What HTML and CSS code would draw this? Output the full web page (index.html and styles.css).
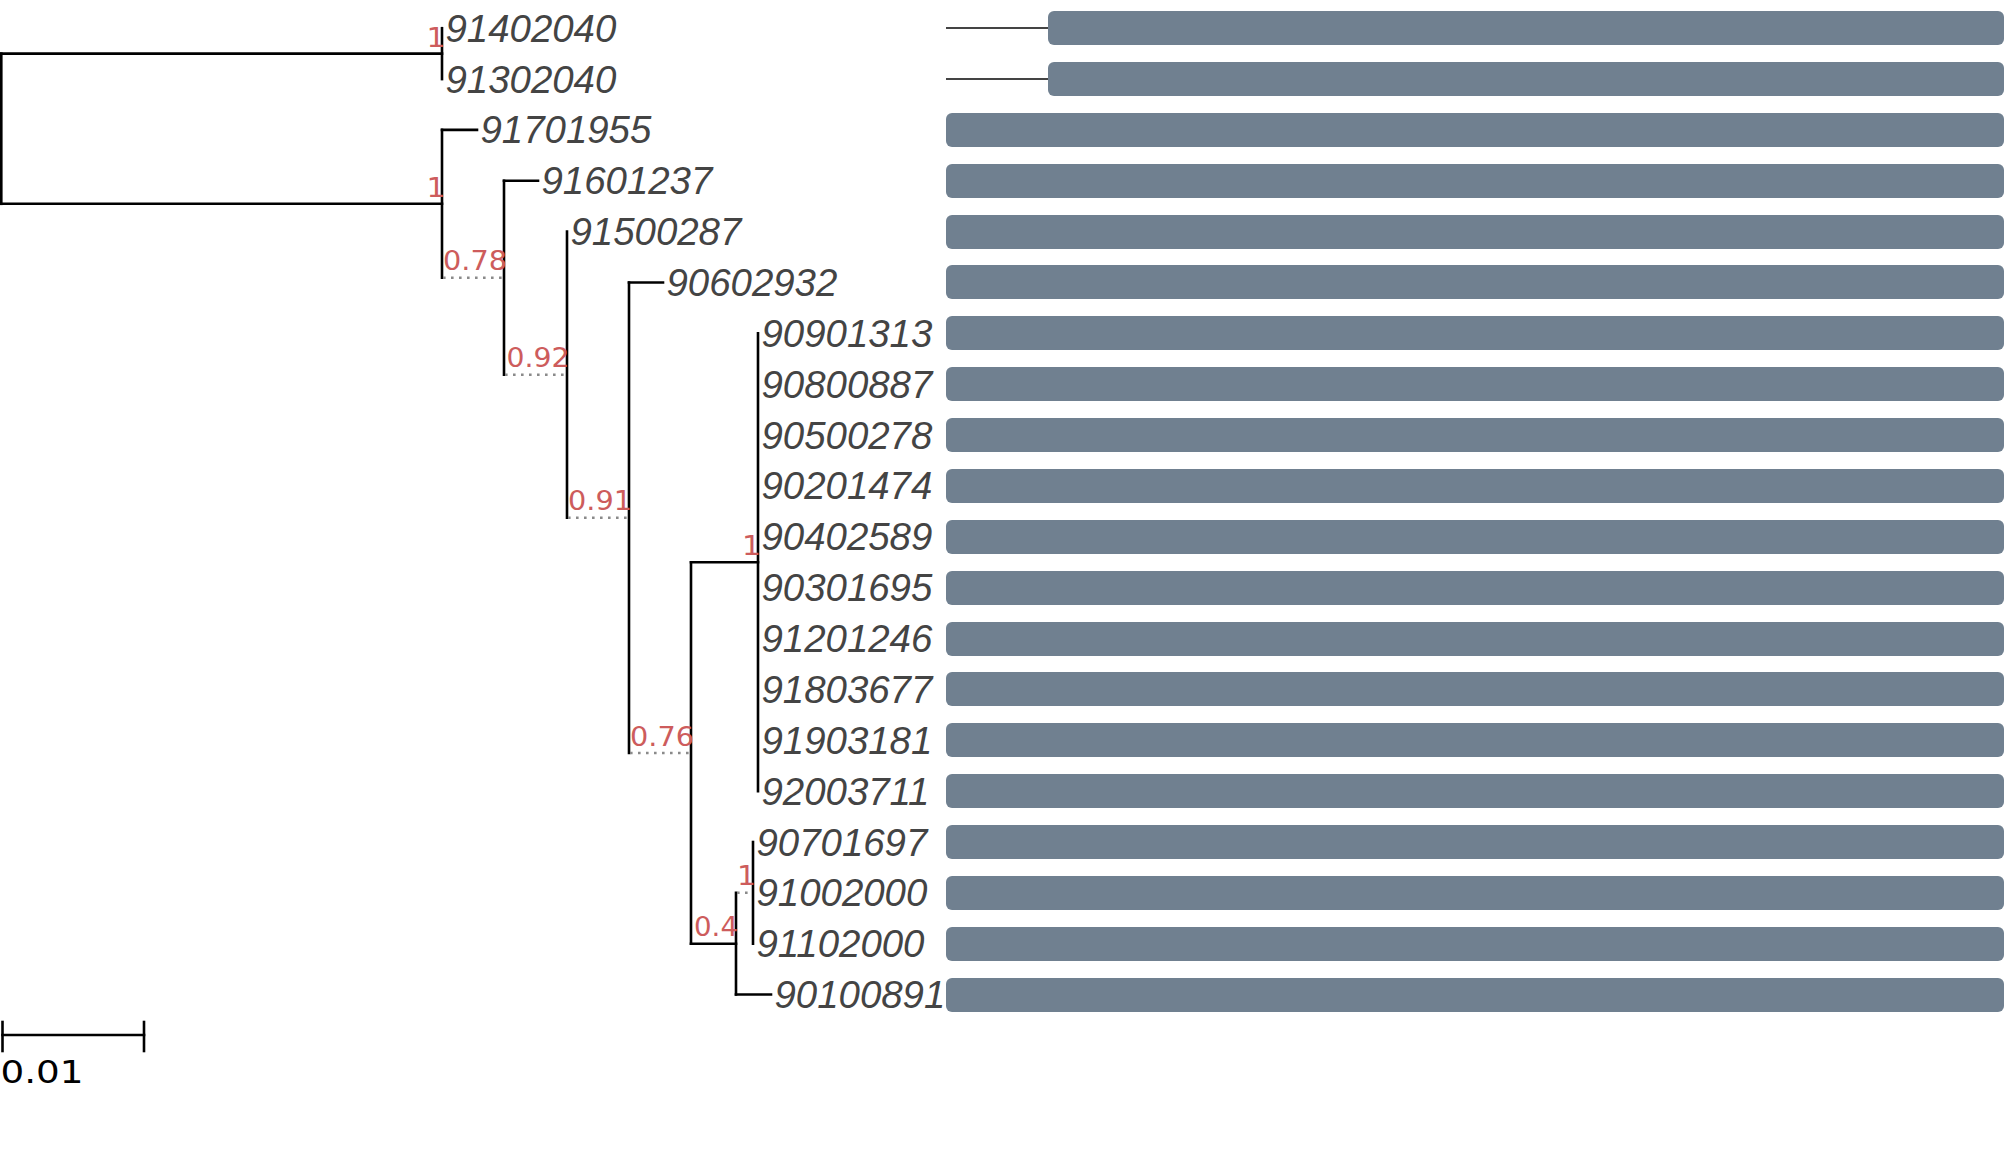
FILE: index.html
```html
<!DOCTYPE html>
<html lang="en">
<head>
<meta charset="utf-8">
<title>Phylogenetic tree</title>
<link rel="stylesheet" href="styles.css">
</head>
<body>
<div class="figure">
  <svg class="tree" width="946" height="1163" viewBox="0 0 946 1163">
    <g class="branch">
      <!-- root -->
      <line x1="1.3" y1="53.6" x2="1.3" y2="203.8"/>
      <line x1="0" y1="53.6" x2="442" y2="53.6"/>
      <line x1="0" y1="203.8" x2="442" y2="203.8"/>
      <!-- A -->
      <line x1="442" y1="28.2" x2="442" y2="79.1"/>
      <!-- B -->
      <line x1="442" y1="129.9" x2="442" y2="277.7"/>
      <line x1="442" y1="129.9" x2="477" y2="129.9"/>
      <!-- C -->
      <line x1="504" y1="180.8" x2="504" y2="374.7"/>
      <line x1="504" y1="180.8" x2="538" y2="180.8"/>
      <!-- D -->
      <line x1="567" y1="231.6" x2="567" y2="517.7"/>
      <!-- E -->
      <line x1="629" y1="282.5" x2="629" y2="753"/>
      <line x1="629" y1="282.5" x2="663" y2="282.5"/>
      <!-- F -->
      <line x1="691" y1="562.3" x2="691" y2="943.7"/>
      <line x1="691" y1="562.3" x2="758" y2="562.3"/>
      <line x1="691" y1="943.7" x2="736" y2="943.7"/>
      <!-- G -->
      <line x1="758" y1="333.4" x2="758" y2="791.1"/>
      <!-- H -->
      <line x1="736" y1="892.8" x2="736" y2="994.5"/>
      <line x1="736" y1="994.5" x2="771" y2="994.5"/>
      <!-- I -->
      <line x1="753" y1="842" x2="753" y2="943.7"/>
    </g>
    <g class="dotted">
      <line x1="443" y1="277.7" x2="504" y2="277.7"/>
      <line x1="505" y1="374.7" x2="567" y2="374.7"/>
      <line x1="568" y1="517.7" x2="629" y2="517.7"/>
      <line x1="630" y1="753" x2="691" y2="753"/>
      <line x1="737" y1="892.8" x2="753" y2="892.8"/>
    </g>
    <g class="support">
      <text x="445.5" y="46.5" textLength="19" lengthAdjust="spacingAndGlyphs">1</text>
      <text x="445.5" y="196.5" textLength="19" lengthAdjust="spacingAndGlyphs">1</text>
      <text x="507" y="270.2" textLength="64" lengthAdjust="spacingAndGlyphs">0.78</text>
      <text x="569.5" y="367.2" textLength="63" lengthAdjust="spacingAndGlyphs">0.92</text>
      <text x="632" y="510.2" textLength="64" lengthAdjust="spacingAndGlyphs">0.91</text>
      <text x="694" y="745.5" textLength="64" lengthAdjust="spacingAndGlyphs">0.76</text>
      <text x="761" y="555" textLength="19" lengthAdjust="spacingAndGlyphs">1</text>
      <text x="738" y="936.2" textLength="44" lengthAdjust="spacingAndGlyphs">0.4</text>
      <text x="756" y="885.3" textLength="19" lengthAdjust="spacingAndGlyphs">1</text>
    </g>
    <g class="tip">
      <text x="445.5" y="41.7">91402040</text>
      <text x="445.5" y="92.6">91302040</text>
      <text x="480.5" y="143.4">91701955</text>
      <text x="541.5" y="194.3">91601237</text>
      <text x="570.5" y="245.1">91500287</text>
      <text x="666.5" y="296">90602932</text>
      <text x="761.5" y="346.9">90901313</text>
      <text x="761.5" y="397.7">90800887</text>
      <text x="761.5" y="448.6">90500278</text>
      <text x="761.5" y="499.4">90201474</text>
      <text x="761.5" y="550.3">90402589</text>
      <text x="761.5" y="601.2">90301695</text>
      <text x="761.5" y="652">91201246</text>
      <text x="761.5" y="702.9">91803677</text>
      <text x="761.5" y="753.7">91903181</text>
      <text x="761.5" y="804.6">92003711</text>
      <text x="756.5" y="855.5">90701697</text>
      <text x="756.5" y="906.3">91002000</text>
      <text x="756.5" y="957.2">91102000</text>
      <text x="774.5" y="1008">90100891</text>
    </g>
    <g class="scale">
      <line x1="2.5" y1="1035" x2="144" y2="1035"/>
      <line x1="2.5" y1="1022" x2="2.5" y2="1051"/>
      <line x1="144" y1="1022" x2="144" y2="1051"/>
      <text x="0.5" y="1083" textLength="83" lengthAdjust="spacingAndGlyphs">0.01</text>
    </g>
  </svg>
  <div class="tracks">
    <div class="track"><span class="lead"></span><span class="bar"></span></div>
    <div class="track"><span class="lead"></span><span class="bar"></span></div>
    <div class="track"><span class="bar"></span></div>
    <div class="track"><span class="bar"></span></div>
    <div class="track"><span class="bar"></span></div>
    <div class="track"><span class="bar"></span></div>
    <div class="track"><span class="bar"></span></div>
    <div class="track"><span class="bar"></span></div>
    <div class="track"><span class="bar"></span></div>
    <div class="track"><span class="bar"></span></div>
    <div class="track"><span class="bar"></span></div>
    <div class="track"><span class="bar"></span></div>
    <div class="track"><span class="bar"></span></div>
    <div class="track"><span class="bar"></span></div>
    <div class="track"><span class="bar"></span></div>
    <div class="track"><span class="bar"></span></div>
    <div class="track"><span class="bar"></span></div>
    <div class="track"><span class="bar"></span></div>
    <div class="track"><span class="bar"></span></div>
    <div class="track"><span class="bar"></span></div>
  </div>
</div>
</body>
</html>
```

FILE: styles.css
```css
html, body {
  margin: 0;
  padding: 0;
  background: #ffffff;
}

body {
  width: 2007px;
  height: 1163px;
  overflow: hidden;
  font-family: "Liberation Sans", Arial, sans-serif;
}

.figure {
  display: flex;
  align-items: flex-start;
  width: 2007px;
  height: 1163px;
}

.tree {
  flex: none;
  display: block;
  overflow: visible;
}

.branch line,
.scale line {
  stroke: #000000;
  stroke-width: 2.6;
  stroke-linecap: square;
}

.dotted line {
  stroke: #8a8a8a;
  stroke-width: 2.6;
  stroke-dasharray: 2.6 5.4;
}

.support text {
  font-family: "DejaVu Sans", "Noto Sans", sans-serif;
  font-size: 26.5px;
  fill: #cd5c5c;
  text-anchor: end;
}

.tip text {
  font-family: "Liberation Sans", Arial, sans-serif;
  font-style: italic;
  font-size: 38.4px;
  fill: #444444;
}

.scale text {
  font-family: "DejaVu Sans", "Noto Sans", sans-serif;
  font-size: 31.5px;
  fill: #000000;
}

.tracks {
  flex: none;
  width: 1058px;
  display: flex;
  flex-direction: column;
  gap: 16.86px;
  padding-top: 11.2px;
}

.track {
  height: 34px;
  display: flex;
  align-items: center;
}

.lead {
  flex: none;
  width: 102px;
  height: 2px;
  background: #444444;
}

.bar {
  flex: 1;
  height: 34px;
  background: #708090;
  border-radius: 6px;
}
```
